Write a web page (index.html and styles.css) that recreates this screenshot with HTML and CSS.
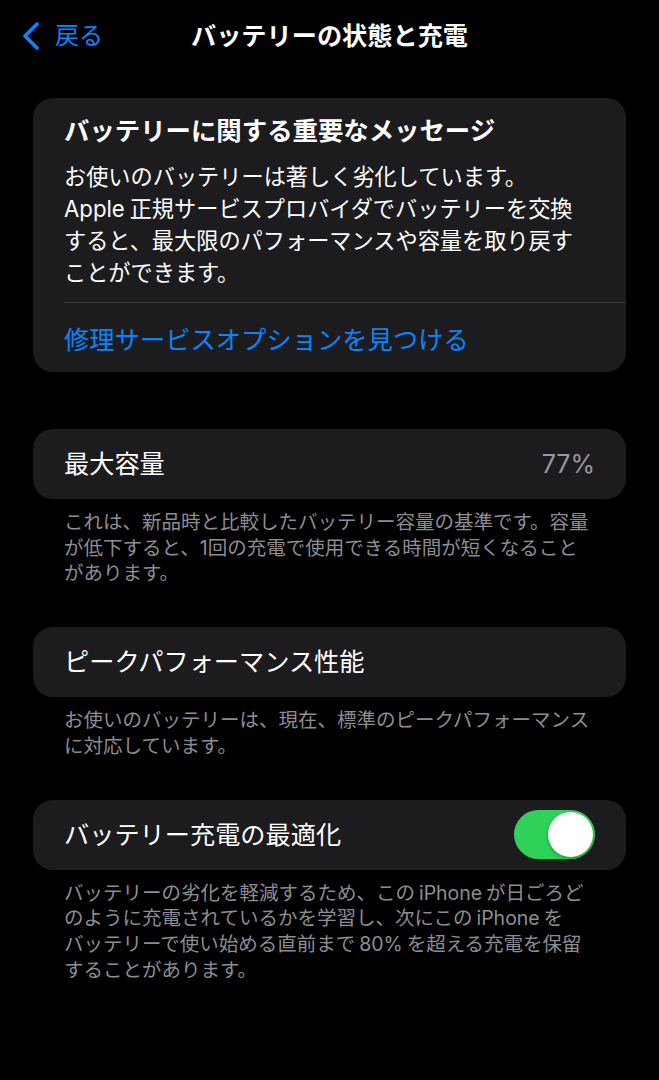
FILE: index.html
```html
<!DOCTYPE html>
<html lang="ja">
<head>
<meta charset="utf-8">
<title>バッテリーの状態と充電</title>
<link rel="stylesheet" href="styles.css">
</head>
<body>
<div class="screen">
  <header class="nav">
    <div class="back">
      <svg class="chev" width="20" height="32" viewBox="0 0 20 32"><polyline points="16,4 4,16 16,28" fill="none" stroke="#0a84ff" stroke-width="3.6" stroke-linecap="round" stroke-linejoin="round"/></svg>
      <span class="back-label">戻る</span>
    </div>
    <div class="nav-title">バッテリーの状態と充電</div>
    <div></div>
  </header>

  <main class="content">
    <section class="card message">
      <div class="msg-title">バッテリーに関する重要なメッセージ</div>
      <p class="msg-body">お使いのバッテリーは著しく劣化しています。<br><span class="lat-r">Apple</span>正規サービスプロバイダでバッテリーを交換<br>すると、最大限のパフォーマンスや容量を取り戻す<br>ことができます。</p>
      <div class="sep"></div>
      <div class="link-row">修理サービスオプションを見つける</div>
    </section>

    <section class="group first-group">
      <div class="card row">
        <span class="label">最大容量</span>
        <span class="value">77%</span>
      </div>
      <p class="foot">これは、新品時と比較したバッテリー容量の基準です。容量<br>が低下すると、1回の充電で使用できる時間が短くなること<br>があります。</p>
    </section>

    <section class="group">
      <div class="card row">
        <span class="label">ピークパフォーマンス性能</span>
      </div>
      <p class="foot">お使いのバッテリーは、現在、標準のピークパフォーマンス<br>に対応しています。</p>
    </section>

    <section class="group">
      <div class="card row">
        <span class="label">バッテリー充電の最適化</span>
        <span class="toggle"><span class="knob"></span></span>
      </div>
      <p class="foot">バッテリーの劣化を軽減するため、この<span class="lat">iPhone</span>が日ごろど<br>のように充電されているかを学習し、次にこの<span class="lat">iPhone</span>を<br>バッテリーで使い始める直前まで<span class="lat">80%</span>を超える充電を保留<br>することがあります。</p>
    </section>
  </main>
</div>
</body>
</html>
```

FILE: styles.css
```css
* { box-sizing: border-box; }
html, body {
  margin: 0;
  padding: 0;
  background: #000;
}
body {
  font-family: "Inter", "Noto Sans CJK JP", sans-serif;
  color: #fff;
  width: 659px;
  min-height: 1080px;
}
.screen {
  display: flex;
  flex-direction: column;
}
.nav {
  height: 72px;
  display: grid;
  grid-template-columns: 1fr auto 1fr;
  align-items: center;
}
.back {
  display: flex;
  align-items: center;
  padding-left: 21px;
  gap: 14px;
  color: #0a84ff;
}
.chev { display: block; }
.back-label {
  font-size: 24px;
  line-height: 32px;
}
.nav-title {
  font-size: 25.2px;
  font-weight: 600;
  line-height: 32px;
}
.content {
  padding: 26px 33px 0 33px;
  display: flex;
  flex-direction: column;
}
.card {
  background: #1c1c1e;
  border-radius: 20px;
}
.message {
  padding: 17px 0 0 31px;
}
.msg-title {
  font-size: 25.4px;
  font-weight: 700;
  line-height: 32px;
}
.msg-body {
  margin: 14px 0 0 0;
  font-size: 22.2px;
  line-height: 32px;
}
.lat-r { margin-right: 0.22em; }
.lat { margin: 0 0.2em; }
.sep {
  margin-top: 13px;
  height: 1px;
  background: #38383a;
}
.link-row {
  height: 69px;
  display: flex;
  align-items: center;
  font-size: 25.3px;
  color: #0a84ff;
}
.group {
  display: flex;
  flex-direction: column;
  margin-top: 40px;
}
.first-group { margin-top: 57px; }
.row {
  height: 70px;
  display: flex;
  align-items: center;
  justify-content: space-between;
  padding: 0 31px;
}
.label {
  font-size: 25.2px;
  line-height: 32px;
}
.value {
  font-size: 25px;
  color: #98989e;
}
.toggle {
  width: 81px;
  height: 49px;
  border-radius: 25px;
  background: #30d158;
  display: flex;
  align-items: center;
  justify-content: flex-end;
  padding-right: 2px;
}
.knob {
  width: 45px;
  height: 45px;
  border-radius: 50%;
  background: #fff;
  box-shadow: 0 2px 4px rgba(0,0,0,0.25);
}
.foot {
  margin: 11px 0 0 0;
  padding-left: 31px;
  font-size: 19.5px;
  line-height: 25.7px;
  color: #8d8d93;
}
```
